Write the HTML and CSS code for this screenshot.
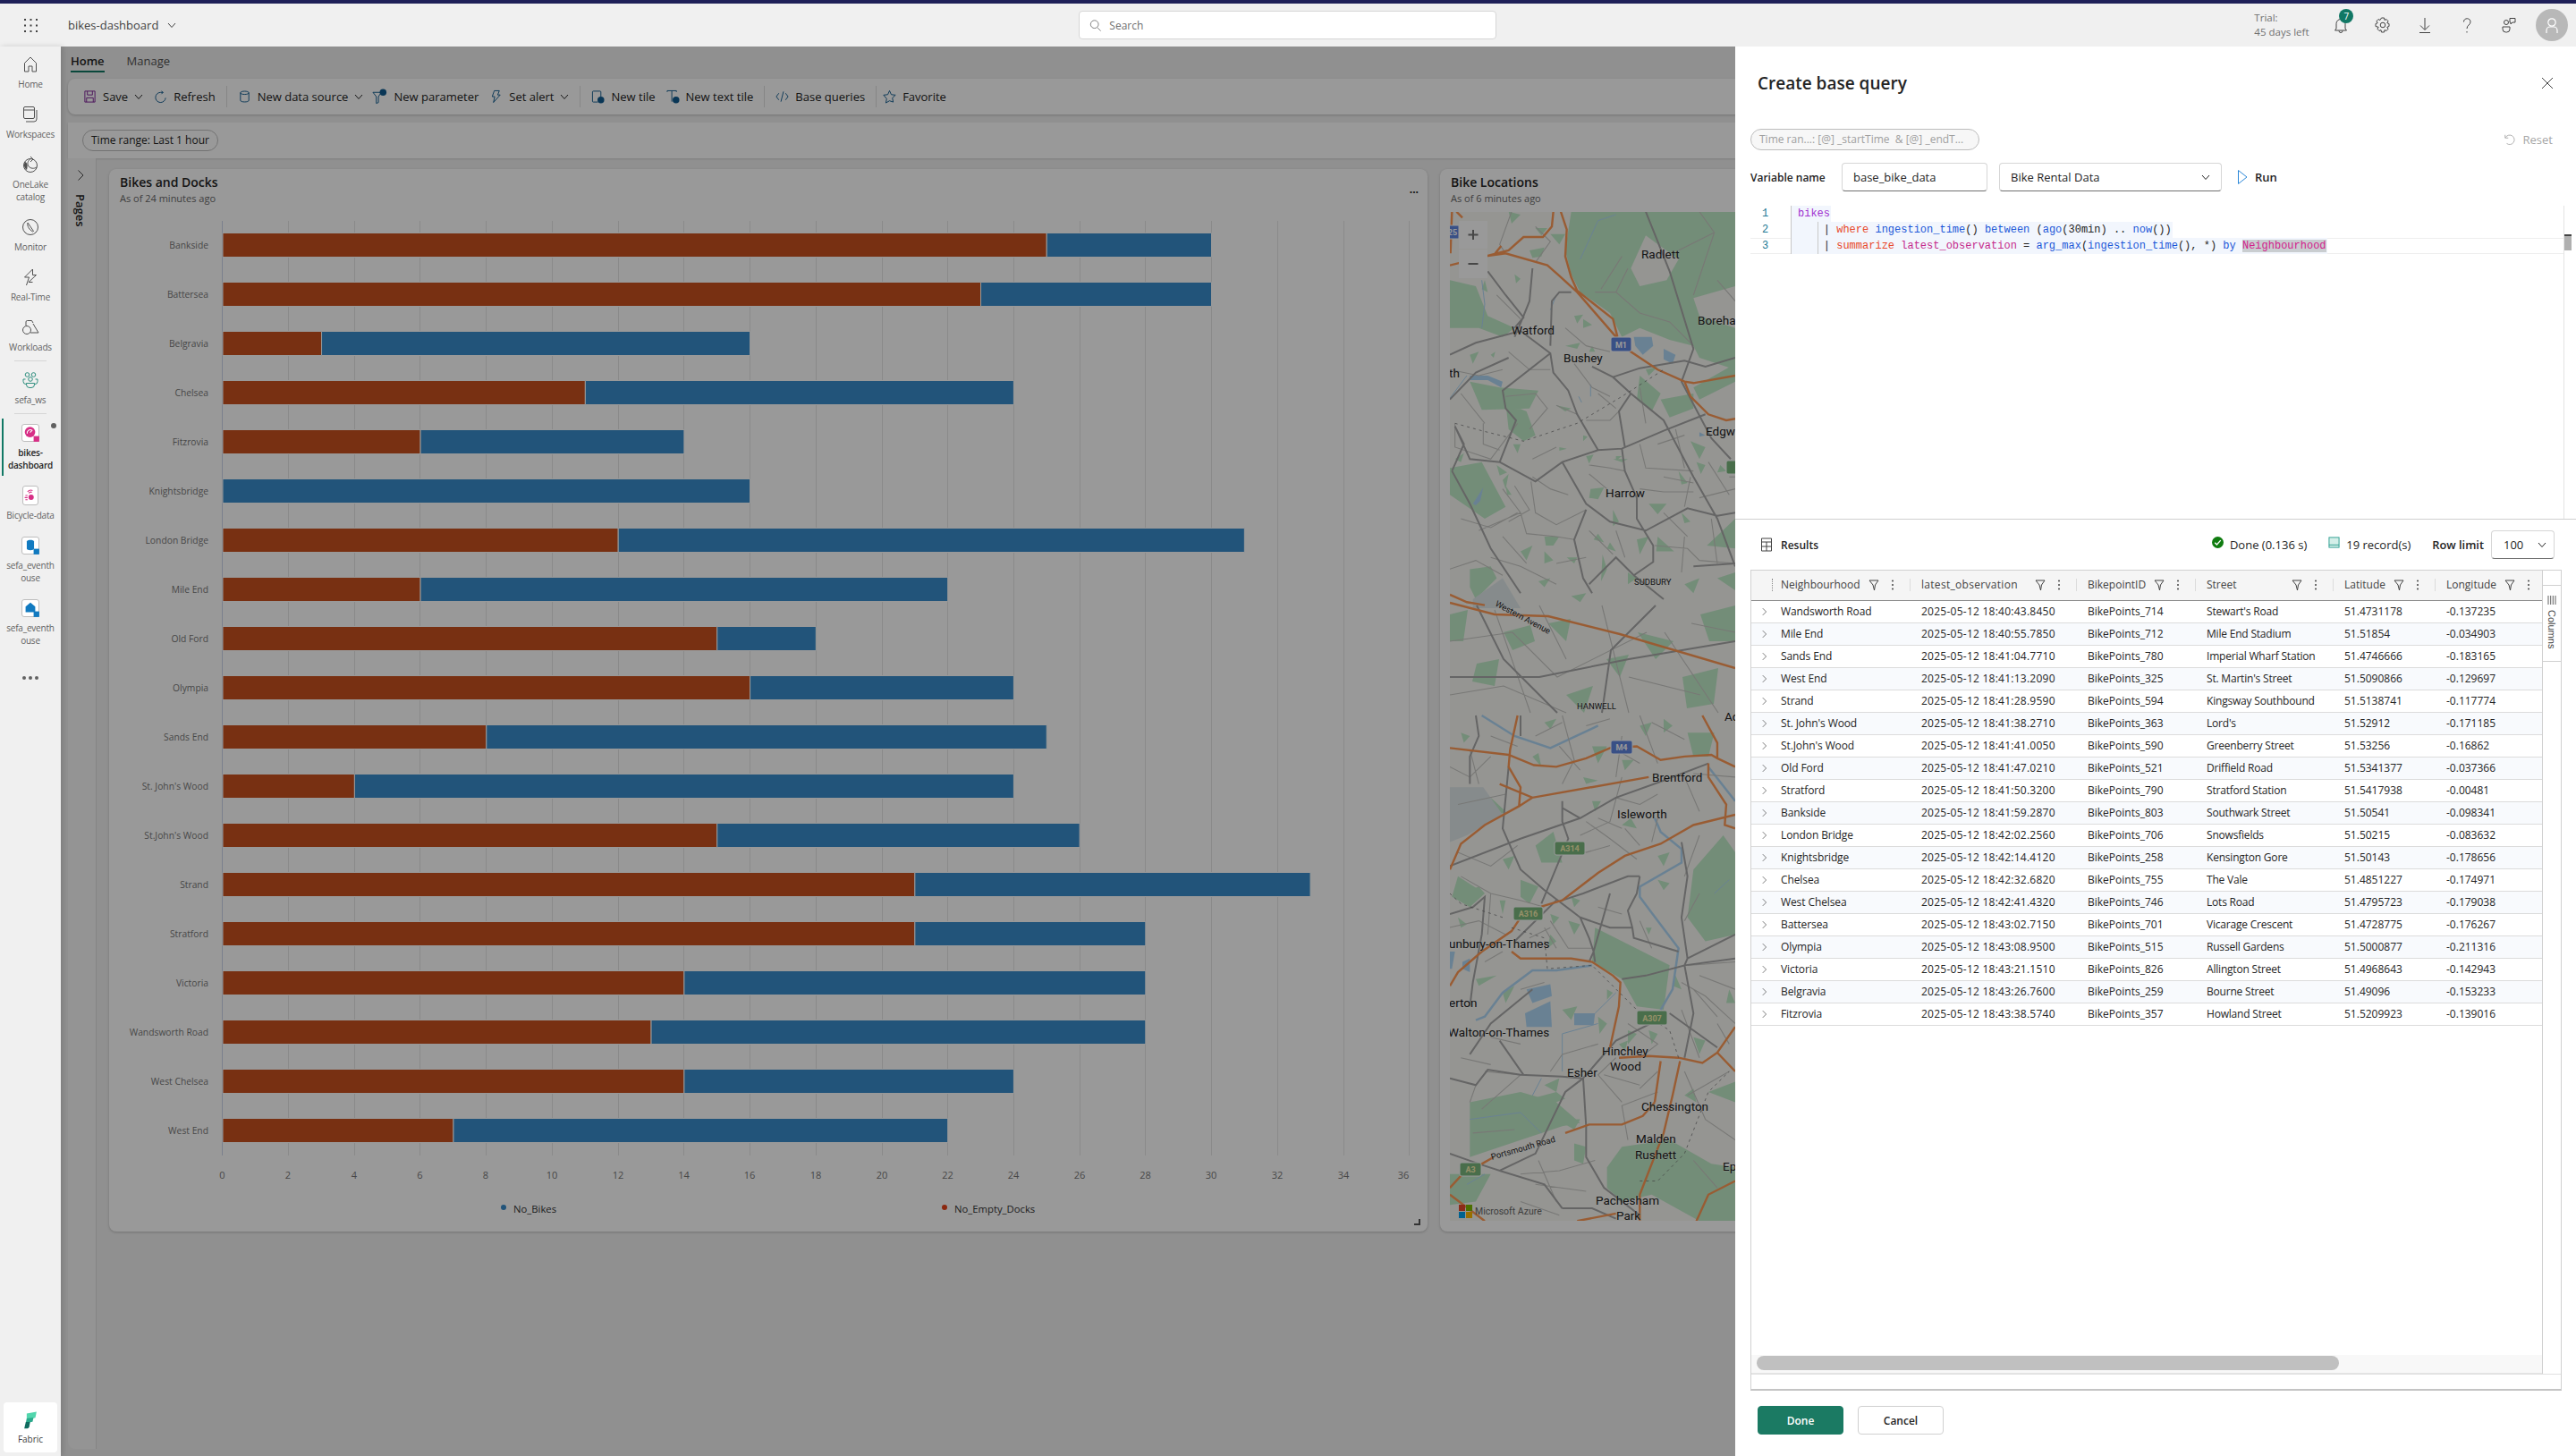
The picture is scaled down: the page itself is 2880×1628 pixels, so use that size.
FILE: index.html
```html
<!DOCTYPE html>
<html lang="en">
<head>
    <meta charset="UTF-8">
    <title>bikes-dashboard</title>
    <link rel="stylesheet" href="styles.css">
</head>
<body>
    <svg class="defs" width="0" height="0">
        <symbol id="i-chev-down" viewBox="0 0 10 10"><path d="M1 3l4 4.5L9 3"/></symbol>
        <symbol id="i-chev-right" viewBox="0 0 10 14"><path d="M2.5 1.5L8 7l-5.5 5.5"/></symbol>
        <symbol id="i-filter" viewBox="0 0 12 14"><path d="M1 2h10L7.5 7 6.5 13 5 7z"/></symbol>
        <symbol id="i-kebab" viewBox="0 0 4 14"><circle cx="2" cy="2.5" r="1" class="solid"/><circle cx="2" cy="7" r="1" class="solid"/><circle cx="2" cy="11.5" r="1" class="solid"/></symbol>
    </svg>

    <header class="topbar">
        <svg class="waffle" viewBox="0 0 15 15"><g class="solid"><rect x="0" y="0" width="2" height="2"/><rect x="6.5" y="0" width="2" height="2"/><rect x="13" y="0" width="2" height="2"/><rect x="0" y="6.5" width="2" height="2"/><rect x="6.5" y="6.5" width="2" height="2"/><rect x="13" y="6.5" width="2" height="2"/><rect x="0" y="13" width="2" height="2"/><rect x="6.5" y="13" width="2" height="2"/><rect x="13" y="13" width="2" height="2"/></g></svg>
        <span class="app-name">bikes-dashboard</span>
        <svg class="chev"><use href="#i-chev-down"/></svg>
        <div class="search">
            <svg class="search-icon" viewBox="0 0 16 16"><circle cx="6.5" cy="6.5" r="5"/><path d="M10 10.5l4.5 4.5"/></svg>
            <span>Search</span>
        </div>
        <div class="trial">Trial:<br>45 days left</div>
        <div class="top-icon bell">
            <svg viewBox="0 0 20 20"><path d="M5 14V8.500a5 5 0 0 1 10 0V14l1.500 2h-13zM8 16.500a2 2 0 0 0 4 0"/></svg>
            <span class="badge">7</span>
        </div>
        <div class="top-icon"><svg viewBox="0 0 20 20"><path d="M8.500 2h3l.5 2.500 2-1 2 2.200-1.200 2 2.200.800v3l-2.200.800 1.200 2-2 2.200-2-1-.5 2.500h-3l-.5-2.500-2 1-2-2.200 1.200-2L2 11.500v-3l2.200-.800-1.200-2 2-2.200 2 1z"/><circle cx="10" cy="10" r="2.800"/></svg></div>
        <div class="top-icon"><svg viewBox="0 0 20 20"><path d="M10 2v13M5 10.500l5 5 5-5M4 18.500h12"/></svg></div>
        <div class="top-icon"><svg viewBox="0 0 20 20"><path d="M6.500 6.500C6.500 1.500 14 1.500 14 6.500c0 3.500-4 3.500-4 7.500M10 17v1.500"/></svg></div>
        <div class="top-icon"><svg viewBox="0 0 20 20"><circle cx="7" cy="7" r="2.500"/><path d="M11 2.500h6v4.500h-3l-2 2V7h-1zM3 12h8v2.500a3.500 3.500 0 0 1-3.500 3.500h-1A3.500 3.500 0 0 1 3 14.500z"/></svg></div>
        <div class="avatar"><svg viewBox="0 0 20 20"><circle cx="10" cy="7" r="4.200"/><path d="M4 19v-3a4 4 0 0 1 4-4h4a4 4 0 0 1 4 4v3"/></svg></div>
    </header>

    <div class="app">
        <nav class="nav">
            <a class="nav-item">
                <svg class="nav-icon" viewBox="0 0 20 20"><path d="M3.500 8.500L10 2l6.500 6.500V18H12v-6H8v6H3.500z"/></svg>
                <span>Home</span>
            </a>
            <a class="nav-item">
                <svg class="nav-icon" viewBox="0 0 20 20"><rect x="2.500" y="1.500" width="12" height="13" rx="1.500"/><path d="M2.500 5h12M17 5v10a3 3 0 0 1-3 3H5"/></svg>
                <span>Workspaces</span>
            </a>
            <a class="nav-item">
                <svg class="nav-icon" viewBox="0 0 20 20"><circle cx="10" cy="11" r="7.500"/><path d="M10 3.500C7 6 6 9 8 12c2 2.500 6 3 9 1M10 1l3 3-3 3"/><path class="solid" d="M4 7c3 1 3 5 2 9-3-2-4-6-2-9z"/></svg>
                <span>OneLake<br>catalog</span>
            </a>
            <a class="nav-item">
                <svg class="nav-icon" viewBox="0 0 20 20"><circle cx="10" cy="10" r="8.500"/><path d="M7 5l6.500 9.500-1 .5C9 13 6 9 7 5z"/></svg>
                <span>Monitor</span>
            </a>
            <a class="nav-item">
                <svg class="nav-icon" viewBox="0 0 20 20"><path d="M12.500 1L3.500 10h5L5.500 19M16.500 7.500L8 15.500h4.500M12.500 1v6.500h4"/></svg>
                <span>Real-Time</span>
            </a>
            <a class="nav-item">
                <svg class="nav-icon" viewBox="0 0 20 20"><path d="M5 8V4a1.500 1.500 0 0 1 1.500-1.500h5L13 5"/><circle cx="6" cy="13" r="4.500"/><path d="M13 6l6 10h-9"/></svg>
                <span>Workloads</span>
            </a>
            <hr class="nav-rule">
            <a class="nav-item nav-ws">
                <svg class="nav-icon teal" viewBox="0 0 20 20"><circle cx="6.500" cy="4" r="2.300"/><circle cx="13.500" cy="4" r="2.300"/><circle cx="10" cy="9" r="2.300"/><path d="M4.500 9H2v2.500a3 3 0 0 0 3 3M15.500 9H18v2.500a3 3 0 0 1-3 3M5.500 13.500H14.500v1.500a3.500 3.500 0 0 1-3.500 3.500H9A3.500 3.500 0 0 1 5.500 15z"/></svg>
                <span>sefa_ws</span>
            </a>
            <hr class="nav-rule">
            <a class="nav-item active">
                <span class="item-tile">
                    <svg viewBox="0 0 20 20"><circle class="pink" cx="9.500" cy="9" r="6.500"/><path class="white-stroke" d="M6 11a4 4 0 0 1 5.500-4.500M9.500 9.500l3-3"/><rect class="pink" x="14" y="14" width="7" height="7"/></svg>
                </span>
                <span>bikes-<br>dashboard</span>
                <i class="unsaved"></i>
            </a>
            <a class="nav-item">
                <span class="item-tile narrow">
                    <svg viewBox="0 0 20 20"><path class="pink-stroke" d="M8 7a3 3 0 0 1 4-1.500M6 5a6 6 0 0 1 7-2M3 10h3M2 13h4M3 16h3"/><circle class="pink" cx="11" cy="12.500" r="3.700"/></svg>
                </span>
                <span>Bicycle-data</span>
            </a>
            <a class="nav-item">
                <span class="item-tile">
                    <svg viewBox="0 0 20 20"><path class="blue" d="M5.500 5c0-2.500 9-2.500 9 0v9c0 2.500-9 2.500-9 0z"/><rect class="blue" x="14" y="14" width="7" height="7"/></svg>
                </span>
                <span>sefa_eventh<br>ouse</span>
            </a>
            <a class="nav-item">
                <span class="item-tile">
                    <svg viewBox="0 0 20 20"><path class="blue" d="M10 3l6 5v7H4V8z"/><rect class="blue" x="14" y="14" width="7" height="7"/></svg>
                </span>
                <span>sefa_eventh<br>ouse</span>
            </a>
            <div class="nav-more"><i></i><i></i><i></i></div>
            <div class="fabric">
                <svg viewBox="0 0 24 32"><path fill="#52d6ad" d="M6 5l16-3-2 10-14 3z"/><path fill="#2aa98b" d="M6 13l11-1.500-1.500 7-11 2z"/><path fill="#0f6b5f" d="M4.500 19h7l-1.500 8a4 4 0 0 1-3 2.500H2z"/></svg>
                <span>Fabric</span>
            </div>
        </nav>

        <main class="main">
            <div class="tabs">
                <a class="tab tab-on">Home</a>
                <a class="tab">Manage</a>
            </div>
            <div class="toolbar">
                <span class="tb-item"><svg class="tb-icon purple" viewBox="0 0 16 16"><path d="M2 1.500h12v13H2zM5 1.500V6h6V1.500M4 14.500V9.500h8v5"/></svg>Save<svg class="chev"><use href="#i-chev-down"/></svg></span>
                <span class="tb-item"><svg class="tb-icon" viewBox="0 0 16 16"><path d="M9 1.500L11 3 9 5M11 3H8a6 6 0 1 0 6 6.500"/></svg>Refresh</span>
                <i class="tb-sep"></i>
                <span class="tb-item"><svg class="tb-icon" viewBox="0 0 16 16"><path d="M3 3.500c0-2.500 10-2.500 10 0v9c0 2.500-10 2.500-10 0zM3 3.500c0 2.500 10 2.500 10 0"/></svg>New data source<svg class="chev"><use href="#i-chev-down"/></svg></span>
                <span class="tb-item tb-tight"><svg class="tb-icon wide" viewBox="0 0 18 18"><path d="M1 4h10L7.500 9v7l-2.500 1V9z"/><circle class="solid" cx="13" cy="4" r="4"/></svg>New parameter</span>
                <span class="tb-item"><svg class="tb-icon" viewBox="0 0 16 16"><path d="M6 1h6l-2 5h3L5 15l1.500-7H3.500z"/></svg>Set alert<svg class="chev"><use href="#i-chev-down"/></svg></span>
                <i class="tb-sep"></i>
                <span class="tb-item"><svg class="tb-icon" viewBox="0 0 16 16"><path d="M8 14.500H2.500a1 1 0 0 1-1-1v-11a1 1 0 0 1 1-1h8a1 1 0 0 1 1 1V8"/><circle class="solid" cx="11.500" cy="12" r="4"/></svg>New tile</span>
                <span class="tb-item"><svg class="tb-icon" viewBox="0 0 16 16"><path d="M1 2.500V1h11v1.500M6.500 1v13"/><circle class="solid" cx="11.500" cy="12" r="4"/></svg>New text tile</span>
                <i class="tb-sep"></i>
                <span class="tb-item"><svg class="tb-icon" viewBox="0 0 16 16"><path d="M4 4L1 8l3 4M12 4l3 4-3 4M9.500 2l-3 12"/></svg>Base queries</span>
                <i class="tb-sep"></i>
                <span class="tb-item tb-fav"><svg class="tb-icon" viewBox="0 0 16 16"><path d="M8 1l2.100 4.600 5 .6-3.700 3.400 1 4.900L8 13l-4.400 2.500 1-4.900L.9 6.200l5-.6z"/></svg>Favorite</span>
            </div>
            <div class="filters"><span class="chip">Time range: Last 1 hour</span></div>
            <div class="canvas">
                <aside class="pages">
                    <svg class="chev-r"><use href="#i-chev-right"/></svg>
                    <span class="pages-label">Pages</span>
                </aside>
                <div class="tiles">
                    <section class="tile tile-chart">
                        <h2>Bikes and Docks</h2>
                        <p>As of 24 minutes ago</p>
                        <span class="tile-menu">...</span>
                        <svg class="chart" width="1474" height="1140" viewBox="0 0 1474 1140">
                            <path class="grid-line" d="M200.500 10V1055M274.500 10V1055M347.500 10V1055M421.500 10V1055M495.500 10V1055M569.500 10V1055M642.500 10V1055M716.500 10V1055M790.500 10V1055M864.500 10V1055M937.500 10V1055M1011.500 10V1055M1085.500 10V1055M1158.500 10V1055M1232.500 10V1055M1306.500 10V1055M1380.500 10V1055M1453.500 10V1055"/>
                            <path class="axis-line" d="M126.500 10V1055"/>
                            <g transform="translate(127 0) scale(36.85 1)">
                                <rect class="bar-docks" x="0" y="23.500" width="25" height="27"/><rect class="bar-bikes" x="25" y="23.500" width="5" height="27"/>
                                <rect class="bar-docks" x="0" y="78.500" width="23" height="27"/><rect class="bar-bikes" x="23" y="78.500" width="7" height="27"/>
                                <rect class="bar-docks" x="0" y="133.500" width="3" height="27"/><rect class="bar-bikes" x="3" y="133.500" width="13" height="27"/>
                                <rect class="bar-docks" x="0" y="188.500" width="11" height="27"/><rect class="bar-bikes" x="11" y="188.500" width="13" height="27"/>
                                <rect class="bar-docks" x="0" y="243.500" width="6" height="27"/><rect class="bar-bikes" x="6" y="243.500" width="8" height="27"/>
                                <rect class="bar-bikes" x="0" y="298.500" width="16" height="27"/>
                                <rect class="bar-docks" x="0" y="353.500" width="12" height="27"/><rect class="bar-bikes" x="12" y="353.500" width="19" height="27"/>
                                <rect class="bar-docks" x="0" y="408.500" width="6" height="27"/><rect class="bar-bikes" x="6" y="408.500" width="16" height="27"/>
                                <rect class="bar-docks" x="0" y="463.500" width="15" height="27"/><rect class="bar-bikes" x="15" y="463.500" width="3" height="27"/>
                                <rect class="bar-docks" x="0" y="518.500" width="16" height="27"/><rect class="bar-bikes" x="16" y="518.500" width="8" height="27"/>
                                <rect class="bar-docks" x="0" y="573.500" width="8" height="27"/><rect class="bar-bikes" x="8" y="573.500" width="17" height="27"/>
                                <rect class="bar-docks" x="0" y="628.500" width="4" height="27"/><rect class="bar-bikes" x="4" y="628.500" width="20" height="27"/>
                                <rect class="bar-docks" x="0" y="683.500" width="15" height="27"/><rect class="bar-bikes" x="15" y="683.500" width="11" height="27"/>
                                <rect class="bar-docks" x="0" y="738.500" width="21" height="27"/><rect class="bar-bikes" x="21" y="738.500" width="12" height="27"/>
                                <rect class="bar-docks" x="0" y="793.500" width="21" height="27"/><rect class="bar-bikes" x="21" y="793.500" width="7" height="27"/>
                                <rect class="bar-docks" x="0" y="848.500" width="14" height="27"/><rect class="bar-bikes" x="14" y="848.500" width="14" height="27"/>
                                <rect class="bar-docks" x="0" y="903.500" width="13" height="27"/><rect class="bar-bikes" x="13" y="903.500" width="15" height="27"/>
                                <rect class="bar-docks" x="0" y="958.500" width="14" height="27"/><rect class="bar-bikes" x="14" y="958.500" width="10" height="27"/>
                                <rect class="bar-docks" x="0" y="1013.500" width="7" height="27"/><rect class="bar-bikes" x="7" y="1013.500" width="15" height="27"/>
                            </g>
                            <g class="cat-labels">
                                <text x="111" y="41">Bankside</text><text x="111" y="96">Battersea</text><text x="111" y="151">Belgravia</text><text x="111" y="206">Chelsea</text><text x="111" y="261">Fitzrovia</text><text x="111" y="316">Knightsbridge</text><text x="111" y="371">London Bridge</text><text x="111" y="426">Mile End</text><text x="111" y="481">Old Ford</text><text x="111" y="536">Olympia</text><text x="111" y="591">Sands End</text><text x="111" y="646">St. John's Wood</text><text x="111" y="701">St.John's Wood</text><text x="111" y="756">Strand</text><text x="111" y="811">Stratford</text><text x="111" y="866">Victoria</text><text x="111" y="921">Wandsworth Road</text><text x="111" y="976">West Chelsea</text><text x="111" y="1031">West End</text>
                            </g>
                            <g class="val-labels">
                                <text x="126.500" y="1081">0</text><text x="200" y="1081">2</text><text x="274" y="1081">4</text><text x="347.500" y="1081">6</text><text x="421" y="1081">8</text><text x="495" y="1081">10</text><text x="569" y="1081">12</text><text x="642.500" y="1081">14</text><text x="716" y="1081">16</text><text x="790" y="1081">18</text><text x="864" y="1081">20</text><text x="937.500" y="1081">22</text><text x="1011" y="1081">24</text><text x="1085" y="1081">26</text><text x="1158.500" y="1081">28</text><text x="1232" y="1081">30</text><text x="1306" y="1081">32</text><text x="1380" y="1081">34</text><text x="1447" y="1081">36</text>
                            </g>
                            <circle class="dot-bikes" cx="441" cy="1113" r="3"/>
                            <text class="legend-text" x="452" y="1119">No_Bikes</text>
                            <circle class="dot-docks" cx="934" cy="1113" r="3"/>
                            <text class="legend-text" x="945" y="1119">No_Empty_Docks</text>
                            <path class="resize" d="M1466 1126v7h-7v-2h5v-5z"/>
                        </svg>
                    </section>
                    <section class="tile tile-map">
                        <h2>Bike Locations</h2>
                        <p>As of 6 minutes ago</p>
                        <svg class="map" width="319" height="1128" viewBox="0 0 319 1128">
                            <rect class="m-land" width="319" height="1128"/>
                            <!-- top half, coordinates read off at 3x -->
                            <g transform="translate(-21 -57) scale(.3333)">
                                <path class="m-green" d="M470 170H1020V420L880 460 900 520 1020 560V700L900 660 880 620 800 600 700 560 640 590 600 510 500 440 470 380 450 300z"/>
                                <path class="m-land" d="M670 360L720 250 830 330 790 400 700 420z"/>
                                <path class="m-green" d="M63 400L150 420 190 520 280 560 240 590 160 560 63 560zM130 740L230 760 360 770 330 830 170 835zM250 810L320 840 350 920 310 940 260 900zM63 1030L170 1010 250 1160 180 1200 63 1120zM130 1370L200 1360 220 1400 150 1470 130 1430zM700 720L770 780 740 840 690 800zM770 800L880 780 880 830 800 860zM1020 680V740L900 800 880 760zM330 300L380 290 370 320 340 325zM400 245H450L430 280zM260 170L300 180 270 210zM350 225L390 225 370 250zM480 520L510 515 490 545zM510 530L540 550 510 560zM280 380L300 395 285 410zM610 1000L660 1000 640 1010zM510 920L525 925 510 940zM430 960L455 965 430 972zM520 990L545 985 530 1015zM620 990L640 990 620 1005zM275 950L300 950 290 980zM535 1100L580 1095 560 1135 530 1130zM610 1170L630 1210 610 1225zM730 1150L790 1150 760 1185zM840 1180L870 1210 850 1215zM560 1250L580 1280 545 1270zM600 1280L620 1310 590 1300zM690 1270L730 1260 700 1320zM760 1260L815 1310 755 1310zM925 1290L1020 1200V1300zM380 1260L430 1260 410 1290 385 1290zM300 1310L340 1290 320 1340zM455 1330L490 1330 480 1350zM380 1310L410 1340 380 1350zM240 1070L260 1050 250 1100zM250 1090L270 1120 255 1120zM450 620L500 610 490 630zM540 620L550 640 530 640zM200 650L215 640 210 660zM130 650L160 640 140 680zM180 400L190 440 170 430zM890 1010L920 1020 905 1050zM830 1040L860 1080 840 1085zM870 940L920 960 900 1000zM970 1020L990 1040 960 1045zM420 820L470 830 450 840zM575 1320L590 1370 570 1410zM660 1380L690 1400 660 1420zM220 1020L255 1045 230 1055zM80 1000L110 980 100 1010zM360 1410L400 1400 380 1430zM470 1460L520 1450 500 1480zM850 1420L900 1400 880 1450zM960 1400L1020 1380V1440zM720 700L760 690 730 720z"/>
                                <path class="m-water" d="M680 590L740 590 745 620 710 650 685 620zM780 630L820 650 810 680 780 665zM130 720L190 720 240 740 235 760 190 735 130 735zM140 1150L175 1095 165 1140 150 1155zM900 910L920 920 900 925z"/>
                                <path class="m-airport" d="M140 1470L240 1400 300 1500H140z"/>
                                <path class="m-thin-water" d="M170 400L180 480 170 560M500 330L560 200 620 180M420 450L400 500M535 750V790M495 790L505 810M60 800L120 720"/>
                                <path class="m-minor" d="M270 170L230 280 250 310M350 220L400 270 350 340M220 450L300 530M80 880V960L200 1000 290 880M330 900L390 830 350 780 250 790M420 820L490 850M520 870L600 870 630 840M175 880V950L230 970M700 950L720 1030 880 1040M820 900L850 1030M530 1020L600 1030 650 1040M335 1075L350 1180 420 1220 520 1170M240 1100L300 1180 320 1250 420 1260 480 1270M160 1240L300 1180M780 1060L880 1080M850 1160L870 1060M200 1330L300 1360 420 1420M610 1320L530 1240M750 1290L860 1300 900 1340 1020 1350M1000 1060L1020 1060M550 440L620 440 700 510 800 540 880 620M640 320L570 430M660 360L620 440M880 450L950 240 900 170M950 240L830 300M1020 470L960 400M63 700L160 720 240 700M100 780L180 880M260 640L330 700 400 700M450 560L520 620 600 640M560 780L620 830M480 680L540 760 600 790M340 1000L420 960M700 760L720 880M760 950L850 920M700 1100L780 1110 880 1110M590 1100L530 1050M460 1120L400 1100 340 1060M280 1090L330 1170 260 1210M100 1200L200 1230 290 1180M240 1260L320 1350M60 1370L150 1340 240 1390M420 1350L520 1330M620 1240L650 1330M850 1260L840 1380M900 1130L1020 1100M930 1010L1000 1120M780 1180L860 1260M940 1200L960 1350"/>
                                <path class="m-road" d="M720 170L800 370 880 630 840 740 940 930 1005 1000M190 370L250 450 310 525 280 560M340 360L330 470 310 520 280 590M63 650L150 610 300 570 400 645 410 710 460 770 490 850 560 970 640 965 780 905 920 850M400 645L240 770 250 830 285 870 230 1010 130 1000 80 890M230 1010L350 1075 440 1010 560 970M440 1010L520 1150 600 1210 720 1240 860 1165 960 1190 1020 1180M640 965L650 1040 690 1130 690 1200 745 1290 745 1345 680 1390 620 1330 530 1420M520 1170L480 1270 510 1400 540 1450M610 725L700 695 850 670 920 690 1020 660M470 440H430L405 470 400 620M70 1040L110 950 80 890M70 1040L130 1150 200 1300 300 1450M670 780L630 840 650 960M540 690L610 725 670 780 780 870 880 1060 960 1200 1020 1360M880 1360L1020 1350M680 1390L780 1470M63 800L150 710 260 660"/>
                                <path class="m-moto" d="M410 170L405 220 375 255H310L260 300 190 318 63 350M190 318L250 310 390 350 430 385 490 440 620 590 670 640 760 700 850 740 880 745 1020 720M435 170L455 230 450 320 470 390 490 435 610 530 625 590M850 740L870 790 930 850 990 870 1020 865M70 170L65 310M85 170L105 190M63 1455L120 1480 180 1490M215 310L235 285"/>
                                <path class="m-border" d="M80 880L170 905 310 940 490 880 640 790 780 700"/>
                            </g>
                            <!-- middle stretch between the two crops -->
                            <path class="m-green" d="M60 470L90 462 95 480 70 490zM210 470L250 480 230 500zM30 505L55 500 50 530 25 525zM130 540L160 530 150 560zM260 520L300 510 295 550 265 555zM110 460L135 455 130 480zM175 500L200 495 190 520zM0 450L20 445 15 480 0 480zM280 450L319 440V480L290 480z"/>
                            <path class="m-minor" d="M0 480L70 470 120 520 220 470M50 445L90 560M170 440L200 560M240 470L300 560M0 540L60 530 130 560M100 440L130 500M200 520L280 540M270 460L319 470"/>
                            <path class="m-road" d="M30 440L60 500 120 560M230 440L180 490 170 560M0 520L100 520 200 500 319 480"/>
                            <path class="m-moto" d="M0 437L50 450 110 452 190 472 319 510"/>
                            <!-- bottom half -->
                            <g transform="translate(-21 563) scale(.3333 .3827)">
                                <path class="m-green" d="M880 450L980 350 1020 400V640L920 660 860 590zM550 620L800 730 780 860 690 850 640 770 540 720zM130 1130L300 1100 420 1130 500 1190 440 1200 370 1220 130 1290zM590 1320L640 1260 800 1240 940 1310 1020 1320V1477H900L740 1400 640 1420 590 1380zM350 380L410 340 440 430 370 430zM860 50L950 50 930 120 880 120zM440 860L490 850 470 890zM160 500L180 520 140 550 130 510zM280 790L250 840 240 810zM150 770L220 760 160 790zM540 90L590 90 560 140zM510 180L560 190 520 200zM290 1130L420 1100 450 1120 300 1170zM380 1080L430 1060 420 1100zM420 1180L500 1180 480 1210zM480 1250L520 1260 510 1310 480 1300zM640 320L670 300 690 330zM340 120L360 110 370 150zM200 240L250 280 210 300zM90 470L180 520 130 560 70 530zM850 1110L880 1090 890 1130zM930 1100L1020 1070V1130zM760 480L800 490 780 510zM720 620L740 620 730 640zM400 580L430 590 410 610zM470 530L500 540 480 560zM820 760L840 800 810 790zM1000 800L1020 840 990 840zM630 960L660 950 650 980zM60 1340L200 1340 150 1420 63 1430zM100 50L130 60 110 80zM380 20L420 10 400 40zM700 30L740 20 720 60zM780 10L810 30 780 50zM640 130L680 130 650 160zM540 250L570 250 550 280zM760 410L800 400 780 440zM240 420L280 410 260 450zM300 480L360 500 330 550 300 530zM230 540L250 540 240 580zM400 640L420 660 390 680zM460 600L500 610 480 640zM90 590L120 610 100 620zM590 800L610 810 590 830zM660 920L690 930 660 960zM730 920L760 930 740 960zM880 940L920 950 900 990zM560 880L590 900 565 930z"/>
                                <path class="m-airport" d="M63 210H175L240 290 120 350 63 370z"/>
                                <path class="m-water" d="M320 800L400 785 405 820 340 840zM315 870L400 835 405 910 320 910zM480 870L550 870 545 905 480 905zM63 690L80 690 70 740 63 740zM105 720L130 710 130 750 105 740z"/>
                                <path class="m-river" d="M560 30L400 95 280 60 170 0M930 150L1020 250M750 300L770 340 840 390 840 430 700 500 700 530 760 600 830 680 810 800 770 860M540 730L420 745 340 745 240 810 180 880 150 890"/>
                                <path class="m-thin-water" d="M560 900L440 930 440 1040M620 810L550 870M340 1110L370 1060M180 1340L120 1370M130 1180L300 1160 370 1220M950 520L1000 480"/>
                                <path class="m-minor" d="M90 260L250 230M130 100L160 200M440 0L480 130 440 200M640 60L620 180M430 90L500 160M700 0L760 140M640 180L600 310 500 350M520 310L600 360 690 420M760 300L740 370M900 350L850 470M100 470L200 520 300 540 380 560M200 520L190 640M400 600L460 680 540 680M330 650L400 620M840 780L920 820 1020 900M840 860L900 1000M620 1000L560 1050 640 1130M860 1110L1000 1040M180 1040L300 1050M170 1150L300 1050M130 1130L150 1080M350 1370L520 1390M360 1300L420 1420M760 1100L640 1140 660 1240M1020 720L860 730M880 170L1020 180M63 150L130 180 200 120M200 60L290 90M350 60L440 20M520 30L600 10M620 100L700 140M740 20L850 70M850 180L900 280M620 240L700 260 760 230M440 380L520 400 600 380M560 300L640 330M650 330L700 380M90 400L200 440 290 380M60 620L160 600 250 640M180 720L240 690M300 800L380 780M380 620L420 680M560 560L640 580M700 600L740 680M900 520L850 600M900 760L1020 800M880 800L960 880M960 900L1000 960M660 900L760 960 700 1000M560 960L440 990 400 1040M200 940L300 960M100 1000L200 1020M140 1220L280 1210M580 1050L700 1080M700 1090L760 1040M850 1040L920 1180 1020 1240M550 1300L430 1330 300 1340M300 1420L430 1460M880 1300L960 1380"/>
                                <path class="m-road" d="M150 0L160 60 130 120 130 200M260 150L240 330 300 450 380 510 500 590 530 650 545 690M440 250L440 310 460 360 370 550M300 60L300 0M63 440L300 360 500 300 620 240 780 190 930 140M500 300L440 270M700 470L660 470 510 520 440 540M700 470L690 520 660 570 675 620 680 650 830 690M675 620L600 620 500 590M600 520L545 690 550 720M545 690L530 720M840 370L860 470 840 590 860 710 850 730 720 760 640 770M860 710L1020 640M850 730L1020 710M850 730L880 870 850 1000M800 870L960 970M63 580L140 560 180 530 170 640 140 780 130 850M63 1060L150 1080 190 1035 300 1050 440 1055 510 1060 520 1200 520 1290 580 1380 700 1460M510 1060L450 1100 400 1190 350 1280 230 1330 160 1310 63 1280M230 950L310 1050M230 1330L380 1370 440 1440M440 1440L540 1440 620 1470M510 1060L560 1010 620 950 760 890M280 660L420 540M340 800L200 900 130 990"/>
                                <path class="m-moto" d="M63 95L260 115 345 145 420 150 520 125 600 95 690 90 770 130 850 120 940 115 960 125 1020 150M290 0L265 100 260 150 300 210 295 265 180 320 100 375 63 450M230 200L340 240 730 180M340 240L295 265M910 0L960 80 960 125M930 140V180L990 260 985 320 1020 330M1020 290L880 320 770 375 650 410 560 460 440 540 370 558M300 590L270 630 170 690 90 750 63 790M270 690L300 710H470L540 720 610 760 635 780 630 850 600 970M630 1000L730 995 830 1000 910 1015 960 985 1020 910M960 985L1020 1040M770 1010L750 1130M835 1010L810 1110 780 1220 700 1400V1477M63 1380L100 1345 170 1310 210 1290M450 1220L530 1195H640L710 1170 750 1130M63 1400L180 1477M490 1477L620 1455M890 1477L930 1400 1020 1360"/>
                                <path class="m-border" d="M700 1360L760 1360 850 1280 930 1100 1000 1040M63 520L100 550 240 590M270 620L380 650 390 740 540 730 690 860 800 920 830 1000"/>
                            </g>
                            <g class="m-shields">
                                <rect class="s-blue" x="-4" y="15" width="14" height="15"/><text x="3" y="26">25</text>
                                <rect class="s-blue" x="180" y="140" width="23" height="16" rx="2"/><text x="191.500" y="152">M1</text>
                                <rect class="s-green" x="309" y="278" width="14" height="15" rx="2"/>
                                <rect class="s-blue" x="180" y="591" width="24" height="15" rx="2"/><text x="192" y="602">M4</text>
                                <rect class="s-green" x="117" y="704" width="34" height="15" rx="2"/><text x="134" y="715">A314</text>
                                <rect class="s-green" x="71" y="777" width="33" height="15" rx="2"/><text x="87.500" y="788">A316</text>
                                <rect class="s-green" x="209" y="893" width="34" height="16" rx="2"/><text x="226" y="905">A307</text>
                                <rect class="s-green" x="11" y="1063" width="24" height="15" rx="2"/><text x="23" y="1074">A3</text>
                            </g>
                            <g class="m-labels">
                                <text x="214" y="52">Radlett</text><text x="69" y="137">Watford</text><text x="127" y="168">Bushey</text><text x="277" y="126">Boreha</text><text x="174" y="319">Harrow</text><text x="286" y="250">Edgw</text><text x="-1" y="185">th</text>
                                <text x="226" y="637">Brentford</text><text x="187" y="678">Isleworth</text><text x="-1" y="823">unbury-on-Thames</text><text x="-1" y="889">erton</text><text x="-2" y="922">Walton-on-Thames</text><text x="170" y="943">Hinchley</text><text x="179" y="960">Wood</text><text x="131" y="967">Esher</text><text x="214" y="1005">Chessington</text><text x="208" y="1041">Malden</text><text x="207" y="1059">Rushett</text><text x="163" y="1110">Pachesham</text><text x="186" y="1127">Park</text><text x="305" y="1072">Ep</text><text x="307" y="569">Ac</text>
                                <text class="m-small" x="206" y="417">SUDBURY</text><text class="m-small" x="142" y="556">HANWELL</text>
                                <text class="m-small" transform="rotate(-16 47 1060)" x="47" y="1060">Portsmouth Road</text>
                                <text class="m-small" transform="rotate(28 50 440)" x="50" y="440">Western Avenue</text>
                            </g>
                            <g class="m-zoom">
                                <rect x="10" y="10" width="32" height="31"/><rect x="10" y="42" width="32" height="32"/>
                                <path d="M26 20v11M20.500 25.500h11M20.500 58h11"/>
                            </g>
                            <rect fill="#e8482a" x="10" y="1110" width="7" height="7"/><rect fill="#7fba00" x="18" y="1110" width="7" height="7"/><rect fill="#00a4ef" x="10" y="1118" width="7" height="7"/><rect fill="#ffb900" x="18" y="1118" width="7" height="7"/>
                            <text class="m-attrib" x="28" y="1121">Microsoft Azure</text>
                        </svg>
                    </section>
                </div>
            </div>
        </main>
    </div>

    <div class="scrim"></div>

    <aside class="panel">
        <div class="panel-head">
            <h1>Create base query</h1>
            <svg class="close" viewBox="0 0 14 14"><path d="M1 1l12 12M13 1L1 13"/></svg>
        </div>
        <div class="param-row">
            <span class="chip chip-off">Time ran...: [@] _startTime &nbsp;&amp; [@] _endT...</span>
            <span class="reset"><svg viewBox="0 0 16 16"><path d="M2 2v4h4M2.500 5.500A6 6 0 1 1 4 13"/></svg>Reset</span>
        </div>
        <div class="var-row">
            <label>Variable name</label>
            <div class="field field-name">base_bike_data</div>
            <div class="field field-db">Bike Rental Data<svg class="chev"><use href="#i-chev-down"/></svg></div>
            <span class="run"><svg viewBox="0 0 12 18"><path d="M1.500 1.500L11 9l-9.500 7.500z"/></svg>Run</span>
        </div>
        <div class="editor">
            <div class="line"><span class="ln">1</span><pre class="code"><span class="kw-table">bikes</span></pre></div>
            <div class="line line-guide"><span class="ln">2</span><pre class="code">    | <span class="kw-op">where</span> <span class="kw-fn">ingestion_time</span>() <span class="kw-fn">between</span> (<span class="kw-fn">ago</span>(30min) .. <span class="kw-fn">now</span>())</pre></div>
            <div class="line line-guide line-on"><span class="ln">3</span><pre class="code">    | <span class="kw-op">summarize</span> <span class="kw-col">latest_observation</span> = <span class="kw-fn">arg_max</span>(<span class="kw-fn">ingestion_time</span>(), *) <span class="kw-fn">by</span> <span class="kw-sel">Neighbourhood</span></pre></div>
            <i class="ruler"></i>
        </div>
        <div class="results-head">
            <svg class="res-icon" viewBox="0 0 14 16"><path d="M1.500 1h11v14h-11zM1.500 5h11M1.500 10h11M7 5v10"/></svg>
            <strong>Results</strong>
            <span class="status status-done"><svg viewBox="0 0 12 12"><circle cx="6" cy="6" r="6"/><path d="M3 6.200l2 2 4-4.400"/></svg>Done (0.136 s)</span>
            <span class="status status-rec"><svg viewBox="0 0 14 14"><rect x="1" y="1" width="12" height="12"/><path d="M1 10h12"/></svg>19 record(s)</span>
            <strong class="row-limit">Row limit</strong>
            <div class="field field-limit">100<svg class="chev"><use href="#i-chev-down"/></svg></div>
        </div>
        <div class="grid">
            <div class="grid-body">
                <div class="grid-main">
                    <table>
                        <colgroup><col class="c0"><col class="c1"><col class="c2"><col class="c3"><col class="c4"><col class="c5"><col class="c6"></colgroup>
                        <thead>
                            <tr>
                                <th><i class="grip"></i></th>
                                <th><div class="th"><span>Neighbourhood</span><svg class="th-filter"><use href="#i-filter"/></svg><svg class="th-kebab"><use href="#i-kebab"/></svg></div></th>
                                <th><div class="th th-sep"><span>latest_observation</span><svg class="th-filter"><use href="#i-filter"/></svg><svg class="th-kebab"><use href="#i-kebab"/></svg></div></th>
                                <th><div class="th th-sep"><span>BikepointID</span><svg class="th-filter"><use href="#i-filter"/></svg><svg class="th-kebab"><use href="#i-kebab"/></svg></div></th>
                                <th><div class="th th-sep"><span>Street</span><svg class="th-filter"><use href="#i-filter"/></svg><svg class="th-kebab"><use href="#i-kebab"/></svg></div></th>
                                <th><div class="th th-sep"><span>Latitude</span><svg class="th-filter"><use href="#i-filter"/></svg><svg class="th-kebab"><use href="#i-kebab"/></svg></div></th>
                                <th><div class="th th-sep th-last"><span>Longitude</span><svg class="th-filter"><use href="#i-filter"/></svg><svg class="th-kebab"><use href="#i-kebab"/></svg></div></th>
                            </tr>
                        </thead>
                        <tbody>
                            <tr><td class="exp"><svg><use href="#i-chev-right"/></svg></td><td>Wandsworth Road</td><td>2025-05-12 18:40:43.8450</td><td>BikePoints_714</td><td>Stewart's Road</td><td>51.4731178</td><td>-0.137235</td></tr>
                            <tr><td class="exp"><svg><use href="#i-chev-right"/></svg></td><td>Mile End</td><td>2025-05-12 18:40:55.7850</td><td>BikePoints_712</td><td>Mile End Stadium</td><td>51.51854</td><td>-0.034903</td></tr>
                            <tr><td class="exp"><svg><use href="#i-chev-right"/></svg></td><td>Sands End</td><td>2025-05-12 18:41:04.7710</td><td>BikePoints_780</td><td>Imperial Wharf Station</td><td>51.4746666</td><td>-0.183165</td></tr>
                            <tr><td class="exp"><svg><use href="#i-chev-right"/></svg></td><td>West End</td><td>2025-05-12 18:41:13.2090</td><td>BikePoints_325</td><td>St. Martin's Street</td><td>51.5090866</td><td>-0.129697</td></tr>
                            <tr><td class="exp"><svg><use href="#i-chev-right"/></svg></td><td>Strand</td><td>2025-05-12 18:41:28.9590</td><td>BikePoints_594</td><td>Kingsway Southbound</td><td>51.5138741</td><td>-0.117774</td></tr>
                            <tr><td class="exp"><svg><use href="#i-chev-right"/></svg></td><td>St. John's Wood</td><td>2025-05-12 18:41:38.2710</td><td>BikePoints_363</td><td>Lord's</td><td>51.52912</td><td>-0.171185</td></tr>
                            <tr><td class="exp"><svg><use href="#i-chev-right"/></svg></td><td>St.John's Wood</td><td>2025-05-12 18:41:41.0050</td><td>BikePoints_590</td><td>Greenberry Street</td><td>51.53256</td><td>-0.16862</td></tr>
                            <tr><td class="exp"><svg><use href="#i-chev-right"/></svg></td><td>Old Ford</td><td>2025-05-12 18:41:47.0210</td><td>BikePoints_521</td><td>Driffield Road</td><td>51.5341377</td><td>-0.037366</td></tr>
                            <tr><td class="exp"><svg><use href="#i-chev-right"/></svg></td><td>Stratford</td><td>2025-05-12 18:41:50.3200</td><td>BikePoints_790</td><td>Stratford Station</td><td>51.5417938</td><td>-0.00481</td></tr>
                            <tr><td class="exp"><svg><use href="#i-chev-right"/></svg></td><td>Bankside</td><td>2025-05-12 18:41:59.2870</td><td>BikePoints_803</td><td>Southwark Street</td><td>51.50541</td><td>-0.098341</td></tr>
                            <tr><td class="exp"><svg><use href="#i-chev-right"/></svg></td><td>London Bridge</td><td>2025-05-12 18:42:02.2560</td><td>BikePoints_706</td><td>Snowsfields</td><td>51.50215</td><td>-0.083632</td></tr>
                            <tr><td class="exp"><svg><use href="#i-chev-right"/></svg></td><td>Knightsbridge</td><td>2025-05-12 18:42:14.4120</td><td>BikePoints_258</td><td>Kensington Gore</td><td>51.50143</td><td>-0.178656</td></tr>
                            <tr><td class="exp"><svg><use href="#i-chev-right"/></svg></td><td>Chelsea</td><td>2025-05-12 18:42:32.6820</td><td>BikePoints_755</td><td>The Vale</td><td>51.4851227</td><td>-0.174971</td></tr>
                            <tr><td class="exp"><svg><use href="#i-chev-right"/></svg></td><td>West Chelsea</td><td>2025-05-12 18:42:41.4320</td><td>BikePoints_746</td><td>Lots Road</td><td>51.4795723</td><td>-0.179038</td></tr>
                            <tr><td class="exp"><svg><use href="#i-chev-right"/></svg></td><td>Battersea</td><td>2025-05-12 18:43:02.7150</td><td>BikePoints_701</td><td>Vicarage Crescent</td><td>51.4728775</td><td>-0.176267</td></tr>
                            <tr><td class="exp"><svg><use href="#i-chev-right"/></svg></td><td>Olympia</td><td>2025-05-12 18:43:08.9500</td><td>BikePoints_515</td><td>Russell Gardens</td><td>51.5000877</td><td>-0.211316</td></tr>
                            <tr><td class="exp"><svg><use href="#i-chev-right"/></svg></td><td>Victoria</td><td>2025-05-12 18:43:21.1510</td><td>BikePoints_826</td><td>Allington Street</td><td>51.4968643</td><td>-0.142943</td></tr>
                            <tr><td class="exp"><svg><use href="#i-chev-right"/></svg></td><td>Belgravia</td><td>2025-05-12 18:43:26.7600</td><td>BikePoints_259</td><td>Bourne Street</td><td>51.49096</td><td>-0.153233</td></tr>
                            <tr><td class="exp"><svg><use href="#i-chev-right"/></svg></td><td>Fitzrovia</td><td>2025-05-12 18:43:38.5740</td><td>BikePoints_357</td><td>Howland Street</td><td>51.5209923</td><td>-0.139016</td></tr>
                        </tbody>
                    </table>
                    <div class="h-scroll"><i></i></div>
                </div>
                <div class="grid-side">
                    <div class="columns-tab">
                        <svg viewBox="0 0 10 10"><path d="M1 0v10M3.700 0v10M6.300 0v10M9 0v10"/></svg>
                        <span>Columns</span>
                    </div>
                </div>
            </div>
            <div class="grid-foot"></div>
        </div>
        <div class="panel-actions">
            <button class="btn btn-primary">Done</button>
            <button class="btn">Cancel</button>
        </div>
    </aside>
</body>
</html>
```

FILE: styles.css
```css
* {
    box-sizing: border-box;
}
html, body {
    margin: 0;
    height: 100%;
}
body {
    position: relative;
    width: 2880px;
    height: 1628px;
    overflow: hidden;
    font-family: "Open Sans", "Noto Sans", sans-serif;
    font-size: 12px;
    color: #242424;
    background: #f0f0f0;
}
h1, h2, p {
    margin: 0;
}
svg {
    fill: none;
    stroke: currentColor;
    stroke-width: 1;
}
.defs {
    position: absolute;
}
.solid {
    fill: currentColor;
    stroke: none;
}
.chev {
    width: 10px;
    height: 10px;
    flex: none;
}

/* top bar */
.topbar {
    display: flex;
    align-items: center;
    height: 52px;
    padding: 0 6px 0 27px;
    border-top: 4px solid #1f2058;
    background: #f0f0f0;
    color: #424242;
}
.waffle {
    width: 15px;
    height: 15px;
    margin-right: 34px;
}
.app-name {
    font-size: 13px;
    margin-right: 10px;
}
.search {
    display: flex;
    align-items: center;
    gap: 8px;
    width: 467px;
    height: 32px;
    margin-left: 1009px;
    margin-right: 847px;
    padding-left: 11px;
    background: #fff;
    border: 1px solid #d6d6d6;
    border-radius: 4px;
    color: #707070;
}
.search-icon {
    width: 14px;
    height: 15px;
}
.trial {
    width: 71px;
    font-size: 11.500px;
    line-height: 16px;
    color: #707070;
    white-space: nowrap;
}
.top-icon {
    position: relative;
    width: 20px;
    height: 20px;
    margin-left: 27px;
    color: #424242;
}
.top-icon svg {
    display: block;
    width: 20px;
    height: 20px;
}
.bell {
    margin-left: 16px;
}
.badge {
    position: absolute;
    left: 8px;
    top: -16px;
    width: 16px;
    height: 16px;
    margin-top: 8px;
    border-radius: 50%;
    background: #117865;
    color: #fff;
    font-size: 10px;
    line-height: 16px;
    text-align: center;
}
.avatar {
    width: 36px;
    height: 36px;
    margin-left: 20px;
    padding: 8px;
    border-radius: 50%;
    background: #b8b8b8;
    color: #fff;
}
.avatar svg {
    display: block;
    stroke-width: 1.2;
}

/* app shell */
.app {
    display: flex;
    height: 1576px;
}
.nav {
    position: relative;
    z-index: 2;
    display: flex;
    flex-direction: column;
    align-items: center;
    flex: none;
    width: 68px;
    padding-top: 8px;
    background: #f0f0f0;
    box-shadow: 2px 0 6px rgba(0, 0, 0, 0.15);
}
.nav-item {
    position: relative;
    display: flex;
    flex-direction: column;
    align-items: center;
    width: 68px;
    min-height: 56px;
    padding-bottom: 15px;
    font-size: 10px;
    letter-spacing: -0.2px;
    line-height: 14px;
    color: #616161;
    text-align: center;
}
.nav-item span:last-of-type {
    margin-top: 3px;
    white-space: nowrap;
}
.nav-icon {
    width: 24px;
    height: 24px;
    padding: 2px;
    color: #505050;
}
.nav-icon .solid {
    fill: #505050;
}
.nav-icon.teal {
    color: #2f8f7f;
}
.nav-ws {
    padding-bottom: 8px;
    min-height: 0;
}
.nav-rule {
    width: 36px;
    margin: 0 0 9px;
    border: 0;
    border-top: 1px solid #d6d6d6;
}
.nav-rule:nth-of-type(1) {
    margin-top: -7px;
}
.item-tile {
    position: relative;
    display: block;
    width: 20px;
    height: 20px;
    margin: 2px 0;
    background: #fff;
    border: 1px solid #bdbdbd;
    border-radius: 3px;
}
.item-tile svg {
    display: block;
    width: 18px;
    height: 18px;
    stroke: none;
    overflow: visible;
}
.item-tile.narrow {
    width: 18px;
    height: 22px;
    margin: 1px 0;
}
.item-tile.narrow svg {
    width: 16px;
    height: 20px;
}
.pink {
    fill: #d72f86;
}
.pink-stroke {
    stroke: #d72f86;
    stroke-width: 1.400;
}
.white-stroke {
    stroke: #fff;
    stroke-width: 1.200;
}
.blue {
    fill: #117ac0;
}
.nav-item.active {
    color: #242424;
    font-weight: 600;
}
.nav-item.active::before {
    content: "";
    position: absolute;
    left: 2px;
    top: -4px;
    width: 2px;
    height: 64px;
    background: #117865;
}
.unsaved {
    position: absolute;
    left: 57px;
    top: 1px;
    width: 6px;
    height: 6px;
    border-radius: 50%;
    background: #616161;
}
.nav-more {
    display: flex;
    gap: 3px;
    margin-top: 18px;
}
.nav-more i {
    width: 4px;
    height: 4px;
    border-radius: 50%;
    background: #616161;
}
.fabric {
    display: flex;
    flex-direction: column;
    align-items: center;
    width: 60px;
    height: 56px;
    margin-top: auto;
    margin-bottom: 4px;
    padding-top: 9px;
    background: #fff;
    border-radius: 4px;
    font-size: 10px;
    color: #424242;
}
.fabric svg {
    width: 20px;
    height: 22px;
    stroke: none;
}
.fabric span {
    margin-top: 3px;
}

/* dashboard behind the panel */
.main {
    display: flex;
    flex-direction: column;
    flex: 1;
    min-width: 0;
    padding: 0 0 8px 8px;
    background: #f0f0f0;
    overflow: hidden;
}
.tabs {
    display: flex;
    gap: 25px;
    height: 29px;
    margin-bottom: 7px;
    padding-left: 3px;
    font-size: 13px;
    line-height: 18px;
}
.tab {
    height: 29px;
    padding-top: 7px;
    color: #505050;
}
.tab-on {
    color: #242424;
    font-weight: 600;
    border-bottom: 2px solid #117865;
}
.toolbar {
    display: flex;
    align-items: center;
    gap: 12px;
    flex: none;
    height: 40px;
    margin-bottom: 9px;
    padding-left: 17px;
    background: #fff;
    border-radius: 8px 0 0 8px;
    box-shadow: 0 1px 3px rgba(0, 0, 0, 0.2);
    font-size: 13px;
    white-space: nowrap;
}
.tb-item {
    display: flex;
    align-items: center;
    gap: 7px;
}
.tb-tight {
    margin-left: -2px;
}
.tb-fav {
    margin-left: -5px;
}
.tb-icon {
    width: 15px;
    height: 20px;
    color: #0f5b8f;
}
.tb-icon.wide {
    width: 17px;
}
.tb-icon.purple {
    color: #7d1e96;
}
.tb-sep {
    width: 1px;
    height: 24px;
    background: #e0e0e0;
}
.filters {
    display: flex;
    align-items: center;
    flex: none;
    height: 40px;
    padding-left: 16px;
    background: #fff;
    box-shadow: 0 1px 2px rgba(0, 0, 0, 0.12);
}
.chip {
    display: inline-block;
    height: 24px;
    padding: 0 9px;
    border: 1px solid #c0c0c0;
    border-radius: 12px;
    font-size: 12px;
    line-height: 22px;
    white-space: nowrap;
}
.canvas {
    display: flex;
    flex: 1;
    min-height: 0;
    border-radius: 0 0 0 8px;
    overflow: hidden;
}
.pages {
    display: flex;
    flex-direction: column;
    align-items: center;
    flex: none;
    width: 32px;
    padding: 12px 3px 0 0;
    background: #f7f7f7;
    border-right: 1px solid #dcdcdc;
}
.chev-r {
    width: 10px;
    height: 14px;
    color: #424242;
}
.pages-label {
    margin-top: 14px;
    writing-mode: vertical-rl;
    font-size: 13px;
    font-weight: 600;
}
.tiles {
    display: flex;
    align-items: flex-start;
    gap: 14px;
    padding: 12px 0 0 14px;
}
.tile {
    position: relative;
    flex: none;
    height: 1188px;
    padding: 5px 11px 0 12px;
    background: #fff;
    border-radius: 8px;
    box-shadow: 0 1px 3px rgba(0, 0, 0, 0.2);
}
.tile h2 {
    font-size: 14px;
    font-weight: 600;
    line-height: 19px;
}
.tile p {
    font-size: 11px;
    line-height: 17px;
    color: #6a6a6a;
}
.tile-chart {
    width: 1474px;
}
.tile-menu {
    position: absolute;
    right: 10px;
    top: 17px;
    font-weight: 700;
    line-height: 12px;
}
.chart {
    position: absolute;
    left: 0;
    top: 48px;
    stroke: none;
}
.tile-map {
    width: 1000px;
}
.map {
    position: absolute;
    left: 11px;
    top: 48px;
    stroke: none;
}

/* chart parts */
.grid-line {
    stroke: #e6e6e6;
    stroke-width: 1;
}
.axis-line {
    stroke: #ccd6eb;
    stroke-width: 1;
}
.bar-docks, .bar-bikes {
    stroke: #fff;
    stroke-width: 1;
    vector-effect: non-scaling-stroke;
}
.bar-docks {
    fill: #c8501e;
}
.bar-bikes {
    fill: #398ccb;
}
.cat-labels text {
    font-size: 10.300px;
    fill: #777;
    text-anchor: end;
}
.val-labels text {
    font-size: 11px;
    fill: #777;
    text-anchor: middle;
}
.dot-bikes {
    fill: #398ccb;
}
.dot-docks {
    fill: #e8441a;
}
.legend-text {
    font-size: 11.300px;
    fill: #333;
}
.resize {
    fill: #555;
}

/* map parts */
.map path {
    vector-effect: non-scaling-stroke;
    fill: none;
}
.map .m-land {
    fill: #f8f8f4;
}
.map .m-green {
    fill: #c0ebc8;
}
.map .m-water {
    fill: #b0d8f6;
}
.map .m-airport {
    fill: #dfe8ea;
}
.m-river {
    stroke: #b0d8f6;
    stroke-width: 2.500;
}
.m-thin-water {
    stroke: #b0d8f6;
    stroke-width: 1;
}
.m-minor {
    stroke: #c8c8c4;
    stroke-width: 1.100;
}
.m-road {
    stroke: #a8a8a8;
    stroke-width: 2;
}
.m-moto {
    stroke: #ff9a55;
    stroke-width: 2.400;
}
.m-border {
    stroke: #6a6a6a;
    stroke-width: .7;
    stroke-dasharray: 3 4;
}
.m-labels text {
    font-family: Roboto, sans-serif;
    font-size: 13.500px;
    fill: #222;
    stroke: #fff;
    stroke-width: .4;
    paint-order: stroke;
}
.m-labels .m-small {
    font-size: 9.500px;
}
.s-blue {
    fill: #5f86e0;
    stroke: #fff;
}
.s-green {
    fill: #7ab87e;
    stroke: #fff;
}
.m-shields text {
    font-family: Roboto, sans-serif;
    font-size: 9px;
    font-weight: 700;
    fill: #f8f0b0;
    text-anchor: middle;
}
.m-shields .s-blue + text {
    fill: #fff;
}
.m-zoom rect {
    fill: #fff;
}
.m-zoom path {
    stroke: #777;
    stroke-width: 2;
}
.m-attrib {
    font-family: Roboto, sans-serif;
    font-size: 10.500px;
    fill: #666;
}

/* overlay and side panel */
.scrim {
    position: absolute;
    left: 68px;
    top: 52px;
    right: 0;
    bottom: 0;
    z-index: 3;
    background: rgba(0, 0, 0, 0.4);
}
.panel {
    position: absolute;
    left: 1940px;
    top: 52px;
    right: 0;
    bottom: 0;
    z-index: 4;
    display: flex;
    flex-direction: column;
    padding: 0 16px 0 17px;
    background: #fff;
}
.panel-head {
    display: flex;
    align-items: center;
    justify-content: space-between;
    flex: none;
    height: 82px;
    padding: 0 9px 0 8px;
}
.panel-head h1 {
    font-size: 19px;
    font-weight: 600;
}
.close {
    width: 14px;
    height: 14px;
    color: #424242;
}
.param-row {
    display: flex;
    align-items: center;
    justify-content: space-between;
    flex: none;
    height: 24px;
    margin-top: 10px;
}
.chip-off {
    width: 256px;
    height: 24px;
    overflow: hidden;
    color: #a0a0a0;
    background: #f7f7f7;
    border-color: #bdbdbd;
}
.reset {
    display: flex;
    align-items: center;
    gap: 8px;
    padding-right: 10px;
    color: #a6a6a6;
    font-size: 13px;
}
.reset svg {
    width: 14px;
    height: 16px;
}
.var-row {
    display: flex;
    align-items: center;
    flex: none;
    height: 32px;
    margin-top: 14px;
}
.var-row label {
    width: 102px;
    font-weight: 600;
}
.field {
    display: flex;
    align-items: center;
    justify-content: space-between;
    height: 32px;
    padding: 0 12px;
    background: #fff;
    border: 1px solid #d6d6d6;
    border-bottom-color: #707070;
    border-radius: 4px;
    font-size: 13px;
}
.field-name {
    width: 163px;
    margin-right: 13px;
}
.field-db {
    width: 249px;
    margin-right: 17px;
}
.run {
    display: flex;
    align-items: center;
    gap: 8px;
    font-size: 13px;
    font-weight: 600;
}
.run svg {
    width: 12px;
    height: 18px;
    color: #2b88d8;
}
.editor {
    position: relative;
    flex: 1;
    min-height: 0;
    margin: 16px -16px 0 -17px;
    padding: 0 14px 0 17px;
    border-bottom: 1px solid #d0d0d0;
    font-family: "Liberation Mono", monospace;
    font-size: 12px;
    line-height: 18px;
}
.line {
    position: relative;
    display: flex;
    height: 18px;
}
.ln {
    flex: none;
    width: 46px;
    padding-left: 13px;
    border-right: 1px solid #c8c8c8;
    color: #237893;
    margin-right: 7px;
    text-indent: 0;
}
.code {
    margin: 0;
    padding-right: 1px;
    background: #f2f6fd;
    font: inherit;
    box-shadow: -7px 0 0 #f2f6fd;
}
.line-guide::before {
    content: "";
    position: absolute;
    left: 75px;
    top: 0;
    height: 18px;
    border-left: 1px solid #c8c8c8;
}
.line-on {
    box-shadow: inset 0 1px 0 #eee, inset 0 -1px 0 #eee;
}
.kw-table {
    color: #a02fd0;
}
.kw-op {
    color: #e8482a;
}
.kw-fn {
    color: #1a56d8;
}
.kw-col {
    color: #c52a8c;
}
.kw-sel {
    color: #d3208c;
    background: #c9cdd0;
}
.ruler {
    position: absolute;
    right: 0;
    top: 0;
    bottom: 0;
    width: 14px;
    border-left: 1px solid #e4e4e4;
}
.ruler::before {
    content: "";
    position: absolute;
    left: 0;
    top: 32px;
    width: 8px;
    height: 16px;
    background: #b0b0b0;
    border-top: 2px solid #444;
}
.results-head {
    display: flex;
    align-items: center;
    flex: none;
    height: 56px;
    padding: 0 8px 0 11px;
}
.results-head strong {
    font-weight: 600;
}
.res-icon {
    width: 14px;
    height: 16px;
    margin-right: 9px;
    color: #424242;
}
.status {
    display: flex;
    align-items: center;
    gap: 7px;
    font-size: 13px;
    white-space: nowrap;
}
.status svg {
    width: 13px;
    height: 13px;
}
.status-done {
    margin-left: auto;
    margin-right: 24px;
}
.status-done svg {
    margin-top: -6px;
    stroke: #fff;
    stroke-width: 1.300;
}
.status-done circle {
    fill: #107c10;
    stroke: none;
}
.status-rec svg {
    margin-top: -6px;
    stroke: #2a9d8f;
    fill: #d4efe9;
}
.row-limit {
    margin: 0 8px 0 24px;
    font-size: 12.800px;
    white-space: nowrap;
}
.field-limit {
    width: 71px;
    padding: 0 8px 0 13px;
}
.grid {
    display: flex;
    flex-direction: column;
    flex: none;
    height: 918px;
    border: 1px solid #d0d0d0;
    border-bottom: 2px solid #c4c4c4;
}
.grid-body {
    display: flex;
    height: 898px;
}
.grid-main {
    display: flex;
    flex-direction: column;
    flex: none;
    width: 885px;
    border-right: 1px solid #d0d0d0;
}
.grid-main table {
    width: 884px;
    border-collapse: collapse;
    table-layout: fixed;
}
.c0 { width: 26px; }
.c1 { width: 151px; }
.c2 { width: 186px; }
.c3 { width: 133px; }
.c4 { width: 154px; }
.c5 { width: 114px; }
.c6 { width: 120px; }
thead tr {
    height: 33px;
    background: #f5f5f5;
    border-bottom: 1px solid #8a8a8a;
}
th {
    padding: 0;
    font-weight: 400;
    text-align: left;
}
.grip {
    display: block;
    width: 0;
    height: 14px;
    margin-left: 23px;
    border-left: 1px dotted #888;
}
.th {
    display: flex;
    align-items: center;
    height: 14px;
    padding-left: 7px;
    color: #424242;
    line-height: 14px;
}
.th-sep {
    border-left: 1px solid #dcdcdc;
    padding-left: 12px;
}
th:nth-child(3) .th span {
    letter-spacing: 0.3px;
}
.th span {
    flex: 1;
    white-space: nowrap;
}
.th-filter {
    width: 12px;
    height: 14px;
    flex: none;
    margin-right: 13px;
}
.th-kebab {
    width: 4px;
    height: 14px;
    flex: none;
    margin-right: 17px;
}
.th-last .th-kebab {
    margin-right: 13px;
}
tbody tr {
    height: 25px;
    border-bottom: 1px solid #dcdcdc;
}
tbody tr:nth-child(even) {
    background: #f8fafd;
}
td {
    padding: 0 0 0 13px;
    white-space: nowrap;
    overflow: hidden;
}
td:nth-child(2) {
    padding-left: 7px;
    letter-spacing: -0.1px;
}
td:nth-child(3) {
    letter-spacing: 0.25px;
}
td:nth-child(5) {
    letter-spacing: -0.2px;
}
td.exp {
    padding: 0 0 0 11px;
}
td.exp svg {
    display: block;
    width: 7px;
    height: 10px;
    color: #424242;
}
.h-scroll {
    height: 21px;
    margin-top: auto;
    padding: 1px 0 0 6px;
    background: #f8f8f8;
    border-bottom: 1px solid #e4e4e4;
}
.h-scroll i {
    display: block;
    width: 651px;
    height: 16px;
    border-radius: 8px;
    background: #c0c0c0;
}
.grid-side {
    flex: 1;
    padding-top: 16px;
}
.columns-tab {
    display: flex;
    flex-direction: column;
    align-items: center;
    height: 86px;
    padding-top: 11px;
    border-top: 1px solid #d0d0d0;
    border-bottom: 1px solid #d0d0d0;
}
.columns-tab svg {
    width: 10px;
    height: 10px;
    color: #616161;
}
.columns-tab span {
    margin-top: 6px;
    writing-mode: vertical-rl;
    font-family: "Liberation Sans", sans-serif;
    font-size: 11px;
    color: #424242;
}
.grid-foot {
    flex: 1;
    border-top: 1px solid #e0e0e0;
}
.panel-actions {
    display: flex;
    gap: 16px;
    flex: none;
    margin: 17px 0 24px 8px;
}
.btn {
    width: 96px;
    height: 32px;
    padding: 0;
    background: #fff;
    border: 1px solid #d0d0d0;
    border-radius: 4px;
    font-family: inherit;
    font-size: 12px;
    font-weight: 600;
    color: #242424;
}
.btn-primary {
    background: #1b7a63;
    border-color: #1b7a63;
    color: #fff;
}
```
